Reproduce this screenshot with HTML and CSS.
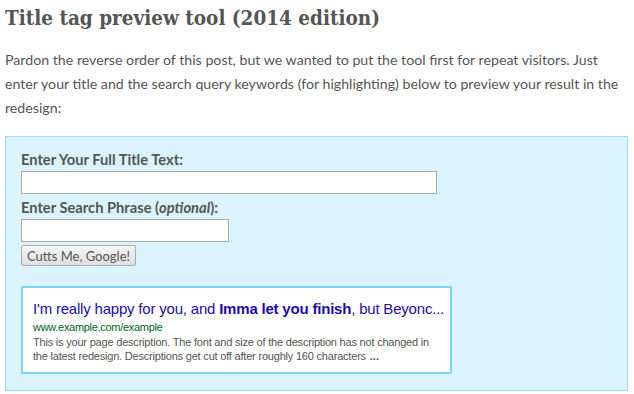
FILE: index.html
```html
<!DOCTYPE html>
<html lang="en">
<head>
  <meta charset="UTF-8" />
  <title>Title tag preview tool</title>
  <link rel="stylesheet" href="styles.css">
</head>
<body>
  <h1>Title tag preview tool (2014 edition)</h1>

  <p class="intro">Pardon the reverse order of this post, but we wanted to put the tool first for repeat visitors. Just enter your title and the search query keywords (for highlighting) below to preview your result in the redesign:</p>

  <div class="herramienta">
    <form id="formulario">
      <label for="titulo">Enter Your Full Title Text:</label>
      <input type="text" id="titulo" class="largo">
      <label for="frase">Enter Search Phrase (<em>optional</em>):</label>
      <input type="text" id="frase" class="corto">
      <button type="submit">Cutts Me, Google!</button>
    </form>

    <!-- Vista previa del resultado -->
    <div class="resultado">
      <div class="res-titulo">I'm really happy for you, and <b>Imma let you finish</b>, but Beyonc...</div>
      <div class="res-url">www.example.com/example</div>
      <div class="res-desc">This is your page description. The font and size of the description has not changed in the latest redesign. Descriptions get cut off after roughly 160 characters <b>...</b></div>
    </div>
  </div>
</body>
</html>
```

FILE: styles.css
```css
body {
  margin: 0;
  padding: 0 5px;
  background-color: #fff;
  color: #555;
  font-family: Lato, "Open Sans", sans-serif;
}

h1 {
  margin: 0;
  padding-top: 4px;
  font-family: "DejaVu Serif Condensed", "DejaVu Serif", "Liberation Serif", serif;
  font-stretch: condensed;
  font-size: 20.5px;
  font-weight: bold;
  line-height: 28px;
  color: #555;
}

.intro {
  margin: 16px 0 16px 0;
  font-size: 14.2px;
  line-height: 24px;
  color: #555;
}

.herramienta {
  width: 623px;
  border: 1px solid #9bdcf5;
  background-color: #daf3fd;
  padding: 13px 15px 16px 15px;
  box-sizing: border-box;
}

form {
  display: flex;
  flex-direction: column;
  align-items: flex-start;
}

label {
  font-size: 14.7px;
  font-weight: bold;
  line-height: 18px;
  color: #555;
}

label em {
  font-weight: bold;
}

input[type="text"] {
  height: 23px;
  box-sizing: border-box;
  border: 1px solid #aaa;
  background-color: #fff;
  margin: 3px 0 4px 0;
  padding: 2px;
}

input.largo {
  width: 416px;
}

input.corto {
  width: 208px;
  margin-bottom: 3px;
}

button {
  font-family: Lato, sans-serif;
  font-size: 13px;
  color: #555;
  height: 21px;
  padding: 0 5px;
  background: linear-gradient(#f6f6f6, #dedede);
  border: 1px solid #aaa;
  border-radius: 2px;
}

.resultado {
  width: 431px;
  box-sizing: border-box;
  margin-top: 20px;
  background-color: #fff;
  border: 2px solid #7fd3f7;
  padding: 11px 10px 9px 10px;
  font-family: Arial, "Liberation Sans", sans-serif;
}

.res-titulo {
  font-size: 15px;
  letter-spacing: -0.2px;
  line-height: 20px;
  color: #1a0dab;
  white-space: nowrap;
}

.res-url {
  font-size: 11px;
  letter-spacing: -0.3px;
  line-height: 16px;
  color: #006621;
}

.res-desc {
  font-size: 11px;
  letter-spacing: -0.2px;
  line-height: 14px;
  color: #545454;
}

.res-desc b {
  letter-spacing: 0;
  margin-left: 1px;
}
```
